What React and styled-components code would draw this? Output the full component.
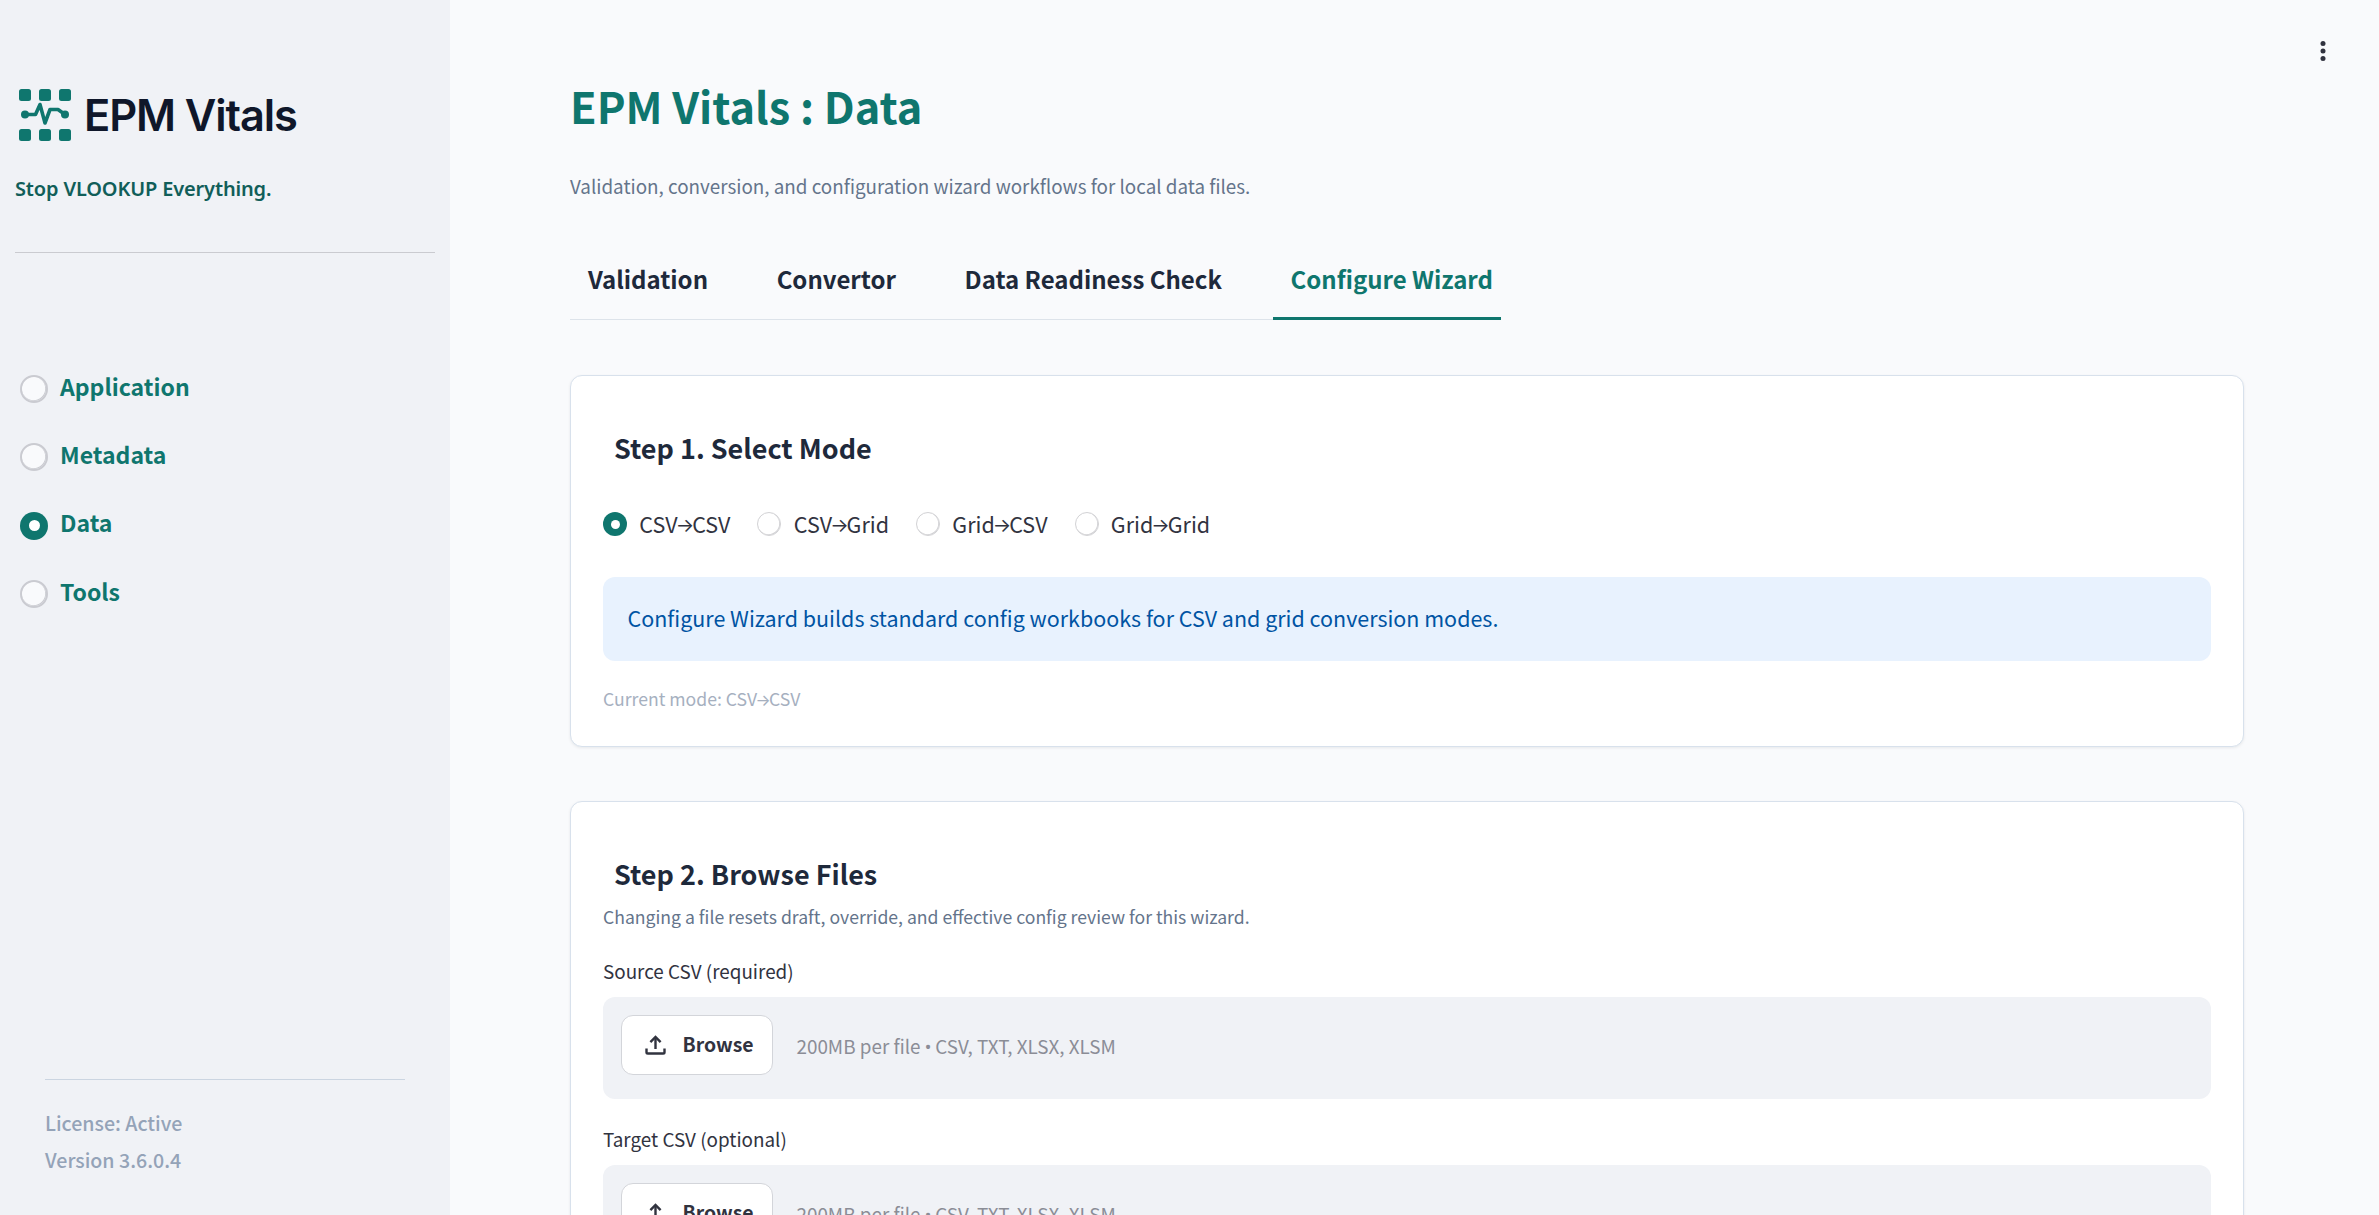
import React, { useState } from 'react'
import styled, { createGlobalStyle } from 'styled-components'

const colors = {
  teal: '#0f766e',
  tealDark: '#115e59',
  navy: '#1e293b',
  text: '#31333f',
  slate: '#64748b',
  muted: '#94a3b8',
  sidebar: '#f0f2f6',
  page: '#f9fafc',
  border: '#d8e1ec',
};

const GlobalStyle = createGlobalStyle`
  * {
    box-sizing: border-box;
  }

  body {
    margin: 0;
    background: ${colors.page};
    color: ${colors.text};
    font-family: 'Noto Sans CJK SC', 'Noto Sans', sans-serif;
  }
`;

const Page = styled.div`
  display: flex;
  height: 100vh;
  overflow: hidden;
`;

const Sidebar = styled.aside`
  flex: none;
  width: 450px;
  padding: 87px 15px 37px;
  background: ${colors.sidebar};
  display: flex;
  flex-direction: column;
`;

const Brand = styled.div`
  height: 56px;
  padding-left: 4px;
  display: flex;
  align-items: center;
  gap: 13px;
`;

const BrandName = styled.span`
  font-family: Inter, sans-serif;
  font-size: 43.4px;
  font-weight: 600;
  line-height: 56px;
  letter-spacing: -1.1px;
  color: #0f172a;
`;

const Tagline = styled.p`
  margin: 31px 0 48px;
  font-family: 'Noto Sans', sans-serif;
  font-size: 20px;
  font-weight: 600;
  line-height: 30px;
  letter-spacing: -0.15px;
  color: ${colors.tealDark};
`;

const Divider = styled.div`
  flex: none;
  height: 1px;
  background: #cacbd0;
`;

const Nav = styled.nav`
  margin-top: 122px;
  padding-left: 5px;
  display: flex;
  flex-direction: column;
  gap: 40.35px;
`;

const NavItem = styled.div`
  height: 28px;
  display: flex;
  align-items: center;
  gap: 12px;
  cursor: pointer;
`;

const NavLabel = styled.span`
  margin-top: -7px;
  font-size: 23.05px;
  font-weight: 700;
  line-height: 28px;
  color: ${colors.teal};
`;

const RadioCircle = styled.span`
  flex: none;
  width: ${props => props.$size}px;
  height: ${props => props.$size}px;
  border-radius: 50%;
  border: ${props => props.$checked ? '0' : `${props.$line}px solid ${props.$lineColor}`};
  background: ${props => props.$checked ? colors.teal : props.$fill};
  box-shadow: ${props => props.$checked ? 'none' : `inset -0.5px -0.5px 0 0.3px ${props.$lineColor}`};
  display: grid;
  place-items: center;

  &::after {
    content: '';
    display: ${props => props.$checked ? 'block' : 'none'};
    width: ${props => props.$dot}px;
    height: ${props => props.$dot}px;
    border-radius: 50%;
    background: white;
  }
`;

const SidebarFooter = styled.div`
  margin: auto 30px 0;
  padding-top: 24px;
  border-top: 1px solid #cbd5e1;
  font-size: 19.6px;
  font-weight: 500;
  line-height: 37px;
  color: ${colors.muted};
`;

const Main = styled.main`
  flex: 1;
  min-width: 0;
`;

const Topbar = styled.header`
  height: 75px;
  padding: 39px 44px 0 0;
  display: flex;
  justify-content: flex-end;
`;

const Content = styled.div`
  padding: 0 135px 0 120px;
`;

const Title = styled.h1`
  margin: 0;
  font-size: 43.3px;
  font-weight: 700;
  line-height: 60px;
  color: ${colors.teal};
`;

const Subtitle = styled.p`
  margin: 36px 0 0;
  font-size: 18.82px;
  line-height: 30px;
  color: ${colors.slate};
`;

const Tabs = styled.div`
  width: fit-content;
  height: 60px;
  margin-top: 59px;
  display: flex;
  gap: 42.6px;
  box-shadow: inset 0 -1px 0 #dde3ea;
`;

const Tab = styled.button`
  padding: 1px 8px 0 18px;
  border: 0;
  border-bottom: 3px solid ${props => props.$active ? colors.teal : 'transparent'};
  background: none;
  display: flex;
  align-items: flex-start;
  font-family: inherit;
  font-size: 24px;
  font-weight: 700;
  line-height: 36px;
  white-space: nowrap;
  color: ${props => props.$active ? colors.teal : colors.navy};
`;

const Card = styled.section`
  margin-top: ${props => props.$gap}px;
  height: ${props => props.$height}px;
  padding: 52px 32px 0;
  border: 1px solid ${colors.border};
  border-radius: 12px;
  background: white;
  box-shadow: 0 1px 3px rgba(15, 23, 42, 0.08);
`;

const StepTitle = styled.h3`
  margin: 0;
  padding-left: 11px;
  font-size: 26.98px;
  font-weight: 700;
  line-height: 40px;
  color: ${colors.navy};
`;

const ModeRow = styled.div`
  margin-top: 44px;
  display: flex;
  gap: 27px;
`;

const ModeOption = styled.div`
  height: 24px;
  display: flex;
  align-items: center;
  gap: 12.3px;
  cursor: pointer;
`;

const ModeLabel = styled.span`
  font-size: 21.5px;
  line-height: 24px;
  white-space: nowrap;
`;

const ArrowGlyph = styled.span`
  display: inline-flex;
  justify-content: center;
  width: 0.77em;
  margin: 0 -0.01em;
  font-family: Inter, sans-serif;
  font-size: 0.9em;
  line-height: 1;
  vertical-align: 0.03em;
`;

const Info = styled.div`
  height: 84px;
  margin-top: 41px;
  padding: 0 24.5px 3px;
  border-radius: 12px;
  background: #e8f2fe;
  display: flex;
  align-items: center;
  font-size: 21.48px;
  color: #0054a3;
`;

const Caption = styled.p`
  margin: ${props => props.$gap}px 0 0;
  font-size: 17.62px;
  line-height: 28px;
  color: ${props => props.$faint ? '#a6b0bf' : colors.slate};
`;

const FieldLabel = styled.label`
  display: block;
  margin-top: ${props => props.$gap}px;
  font-size: 18.85px;
  line-height: 30px;
`;

const Uploader = styled.div`
  height: 102px;
  margin-top: 11px;
  padding: 18px;
  border-radius: 12px;
  background: ${colors.sidebar};
  display: flex;
  gap: 23.5px;
`;

const BrowseButton = styled.button`
  flex: none;
  width: 152px;
  height: 60px;
  padding: 0 0 0 23px;
  border: 1px solid #d3d5da;
  border-radius: 12px;
  background: white;
  display: flex;
  align-items: center;
  gap: 16.5px;
  font-family: inherit;
  color: ${colors.text};
`;

const BrowseText = styled.span`
  margin-top: -2px;
  font-size: 19.4px;
  font-weight: 700;
  line-height: 30px;
`;

const UploadHint = styled.span`
  font-size: 18.85px;
  line-height: 61.5px;
  color: #8b8d96;
`;

const Bullet = styled.span`
  margin: 0 -0.02em;
  font-family: 'Open Sans', sans-serif;
`;

function Logo() {
  return (
    <svg width="52" height="52" viewBox="0 0 52 52" fill={colors.teal}>
      {[0, 20, 40].map(x => (
        <React.Fragment key={x}>
          <rect x={x} y="0" width="12" height="12" rx="2.5" />
          <rect x={x} y="40" width="12" height="12" rx="2.5" />
        </React.Fragment>
      ))}
      <path
        d="M6 25.5H16.5L21 15.5L26 34L31 20.5H39L46 25.5"
        fill="none"
        stroke={colors.teal}
        strokeWidth="3.6"
        strokeLinejoin="round"
      />
      <circle cx="6" cy="25.5" r="4" />
      <circle cx="46" cy="25.5" r="4" />
    </svg>
  )
}

function MenuDots() {
  return (
    <svg width="24" height="24" viewBox="0 0 24 24" fill={colors.text}>
      <circle cx="12" cy="4.5" r="2.5" />
      <circle cx="12" cy="12" r="2.5" />
      <circle cx="12" cy="19.5" r="2.5" />
    </svg>
  )
}

function UploadIcon() {
  return (
    <svg width="21" height="20" viewBox="0 0 21 20" fill="none" stroke={colors.text} strokeWidth="2.4">
      <path d="M10.5 14V2.4" />
      <path d="M5.4 7.2L10.5 2L15.6 7.2" />
      <path d="M1.5 13.6V17.2Q1.5 18.5 2.8 18.5H18.2Q19.5 18.5 19.5 17.2V13.6" />
    </svg>
  )
}

function Mode({ from, to }) {
  return <>{from}<ArrowGlyph>→</ArrowGlyph>{to}</>
}

function FileField({ label, gap }) {
  return (
    <>
      <FieldLabel $gap={gap}>{label}</FieldLabel>
      <Uploader>
        <BrowseButton>
          <UploadIcon />
          <BrowseText>Browse</BrowseText>
        </BrowseButton>
        <UploadHint>
          200MB per file <Bullet>•</Bullet> CSV, TXT, XLSX, XLSM
        </UploadHint>
      </Uploader>
    </>
  )
}

const NAV_ITEMS = ['Application', 'Metadata', 'Data', 'Tools'];
const TABS = ['Validation', 'Convertor', 'Data Readiness Check', 'Configure Wizard'];
const MODES = [
  ['CSV', 'CSV'],
  ['CSV', 'Grid'],
  ['Grid', 'CSV'],
  ['Grid', 'Grid'],
];

export default function App() {
  const [section, setSection] = useState('Data');
  const [tab, setTab] = useState('Configure Wizard');
  const [modeIdx, setModeIdx] = useState(0);
  const [from, to] = MODES[modeIdx];

  return (
    <Page>
      <GlobalStyle />
      <Sidebar>
        <Brand>
          <Logo />
          <BrandName>EPM Vitals</BrandName>
        </Brand>
        <Tagline>Stop VLOOKUP Everything.</Tagline>
        <Divider />
        <Nav>
          {NAV_ITEMS.map(item => (
            <NavItem key={item} onClick={() => setSection(item)}>
              <RadioCircle
                $size={28}
                $dot={11}
                $line={2}
                $lineColor="#cacbd1"
                $fill={colors.page}
                $checked={item === section}
              />
              <NavLabel>{item}</NavLabel>
            </NavItem>
          ))}
        </Nav>
        <SidebarFooter>
          <div>License: Active</div>
          <div>Version 3.6.0.4</div>
        </SidebarFooter>
      </Sidebar>
      <Main>
        <Topbar>
          <MenuDots />
        </Topbar>
        <Content>
          <Title>EPM Vitals : Data</Title>
          <Subtitle>
            Validation, conversion, and configuration wizard workflows for local data files.
          </Subtitle>
          <Tabs>
            {TABS.map(name => (
              <Tab key={name} $active={name === tab} onClick={() => setTab(name)}>
                {name}
              </Tab>
            ))}
          </Tabs>
          <Card $gap={55} $height={372}>
            <StepTitle>Step 1. Select Mode</StepTitle>
            <ModeRow>
              {MODES.map(([a, b], idx) => (
                <ModeOption key={a + b} onClick={() => setModeIdx(idx)}>
                  <RadioCircle
                    $size={24}
                    $dot={9}
                    $line={1}
                    $lineColor="#d2d2d5"
                    $fill="white"
                    $checked={idx === modeIdx}
                  />
                  <ModeLabel><Mode from={a} to={b} /></ModeLabel>
                </ModeOption>
              ))}
            </ModeRow>
            <Info>
              Configure Wizard builds standard config workbooks for CSV and grid conversion modes.
            </Info>
            <Caption $gap={24} $faint>
              Current mode: <Mode from={from} to={to} />
            </Caption>
          </Card>
          <Card $gap={54} $height={520}>
            <StepTitle>Step 2. Browse Files</StepTitle>
            <Caption $gap={9}>
              Changing a file resets draft, override, and effective config review for this wizard.
            </Caption>
            <FileField label="Source CSV (required)" gap={25} />
            <FileField label="Target CSV (optional)" gap={25} />
          </Card>
        </Content>
      </Main>
    </Page>
  )
}
